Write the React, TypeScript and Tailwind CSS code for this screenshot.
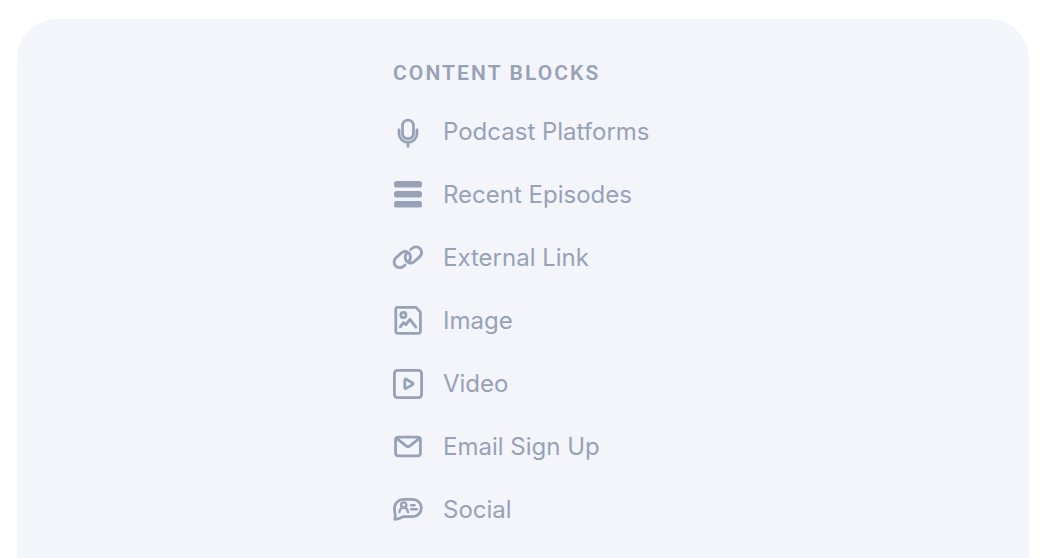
import type { ReactNode } from "react";

type Block = { label: string; icon: ReactNode };

const blocks: Block[] = [
  {
    label: "Podcast Platforms",
    icon: (
      <>
        <rect x="9.5" y="3.2" width="11" height="18.6" rx="5.5" />
        <path d="M6 13v3.4a9 9 0 0 0 18 0V13M15 25.6v3.8" />
      </>
    ),
  },
  {
    label: "Recent Episodes",
    icon: (
      <g fill="currentColor" stroke="none">
        <rect x="1" y="1" width="28" height="6.6" rx="2.6" />
        <rect x="1" y="11" width="28" height="6.6" rx="2.6" />
        <rect x="1" y="21" width="28" height="6.6" rx="2.6" />
      </g>
    ),
  },
  {
    label: "External Link",
    icon: (
      <>
        <path d="M12 22 10.6 23.2A5.6 5.6 0 0 1 2.9 14.9L8.3 10A5.4 5.4 0 0 1 17.4 13.6Q17.6 16.2 16.2 17.8" />
        <path d="M17.7 6.5 19.1 5.3A5.6 5.6 0 0 1 26.8 13.6L21.4 18.5A5.4 5.4 0 0 1 12.3 14.9Q12.1 12.3 13.5 10.7" />
      </>
    ),
  },
  {
    label: "Image",
    icon: (
      <>
        <path d="M4.6 1.3H22.8L27.4 5.9V25.6a1.8 1.8 0 0 1-1.8 1.8H4.6a1.8 1.8 0 0 1-1.8-1.8V3.1a1.8 1.8 0 0 1 1.8-1.8Z" />
        <circle cx="10.4" cy="8.9" r="2.6" />
        <path d="M7.2 20.8 10.4 16.7 12.9 18.6 17 13.4 22.9 21.2" />
      </>
    ),
  },
  {
    label: "Video",
    icon: (
      <>
        <rect x="1.4" y="1.4" width="27.2" height="27.2" rx="3" />
        <path d="M11.8 11v7.6c0 .8.7 1.2 1.4.8l6.3-3.8c.7-.4.7-1.2 0-1.6l-6.3-3.8c-.7-.4-1.4 0-1.4.8Z" />
      </>
    ),
  },
  {
    label: "Email Sign Up",
    icon: (
      <>
        <rect x="2.6" y="5.2" width="24.8" height="18.6" rx="2.6" />
        <path d="M3.6 6.4 12.8 13.7a3.5 3.5 0 0 0 4.4 0L26.4 6.4" />
      </>
    ),
  },
  {
    label: "Social",
    icon: (
      <>
        <path d="M10.4 4.3H19.6a8.7 8.7 0 0 1 0 17.4H10.2Q6.4 24.2 1.8 24.4C3.2 21.6 1.4 18 1.4 13.3A9 9 0 0 1 10.4 4.3Z" />
        <g strokeWidth="2.4">
          <circle cx="10.7" cy="10" r="2.6" />
          <path d="M6.4 17.2c.3-2.9 2-4.6 4.3-4.6s4 1.7 4.3 4.6M18.2 10.2h3.4M18.2 14.2h5.6" />
        </g>
      </>
    ),
  },
];

export default function App() {
  return (
    <main className="flex min-h-screen bg-white px-[17px] pt-[19px] font-['Inter',sans-serif] text-[#97a1b7]">
      <section
        aria-labelledby="blocks-title"
        className="flex flex-1 justify-center rounded-t-[40px] bg-[#f3f5fb] pt-10"
      >
        <div className="min-w-[260px]">
          <h2
            id="blocks-title"
            className="font-['Roboto',sans-serif] text-[21px] leading-7 font-semibold tracking-widest"
          >
            CONTENT BLOCKS
          </h2>
          <ul className="mt-[13px]">
            {blocks.map(({ label, icon }) => (
              <li key={label} className="flex h-[63px] items-center gap-5">
                <svg
                  viewBox="0 0 30 30"
                  aria-hidden="true"
                  className="size-[30px] shrink-0 overflow-visible"
                  fill="none"
                  stroke="currentColor"
                  strokeWidth="2.8"
                  strokeLinecap="round"
                  strokeLinejoin="round"
                >
                  {icon}
                </svg>
                <span className="text-2xl">{label}</span>
              </li>
            ))}
          </ul>
        </div>
      </section>
    </main>
  );
}
